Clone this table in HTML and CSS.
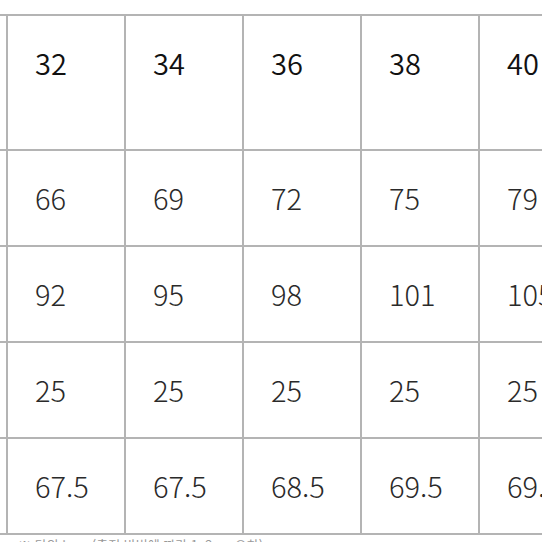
FILE: index.html
```html
<!DOCTYPE html>
<html lang="ko">
<head>
<meta charset="utf-8">
<link rel="stylesheet" href="styles.css">
</head>
<body>
<div class="page">
  <div class="size-table">
    <div class="cell head"></div>
    <div class="cell head">32</div>
    <div class="cell head">34</div>
    <div class="cell head">36</div>
    <div class="cell head">38</div>
    <div class="cell head">40</div>

    <div class="cell"></div>
    <div class="cell">66</div>
    <div class="cell">69</div>
    <div class="cell">72</div>
    <div class="cell">75</div>
    <div class="cell">79</div>

    <div class="cell"></div>
    <div class="cell">92</div>
    <div class="cell">95</div>
    <div class="cell">98</div>
    <div class="cell">101</div>
    <div class="cell">105</div>

    <div class="cell"></div>
    <div class="cell">25</div>
    <div class="cell">25</div>
    <div class="cell">25</div>
    <div class="cell">25</div>
    <div class="cell">25</div>

    <div class="cell"></div>
    <div class="cell">67.5</div>
    <div class="cell">67.5</div>
    <div class="cell">68.5</div>
    <div class="cell">69.5</div>
    <div class="cell">69.5</div>
  </div>
  <p class="note">※ 단위 : cm (측정 방법에 따라 1~2cm 오차)</p>
</div>
</body>
</html>
```

FILE: styles.css
```css
html, body {
  margin: 0;
  padding: 0;
  background: #ffffff;
}

body {
  width: 542px;
  height: 542px;
  overflow: hidden;
  font-family: "Noto Sans CJK KR", "Noto Sans", sans-serif;
}

.page {
  padding-top: 14px;
}

.size-table {
  display: grid;
  grid-template-columns: repeat(6, 116px);
  grid-template-rows: 133px repeat(4, 94px);
  gap: 2px;
  padding: 2px;
  margin-left: -112px;
  width: max-content;
  background: #b4b4b4;
}

.cell {
  background: #ffffff;
  display: flex;
  align-items: center;
  padding-left: 27px;
  font-size: 29px;
  font-weight: 300;
  color: #2a2a2a;
  line-height: 1;
  padding-bottom: 1px;
}

.cell.head {
  align-items: flex-start;
  padding-top: 32px;
  font-weight: 350;
  color: #111111;
}

.note {
  margin: 2px 0 0 18px;
  font-size: 13px;
  color: #999999;
  line-height: 1.2;
}
```
